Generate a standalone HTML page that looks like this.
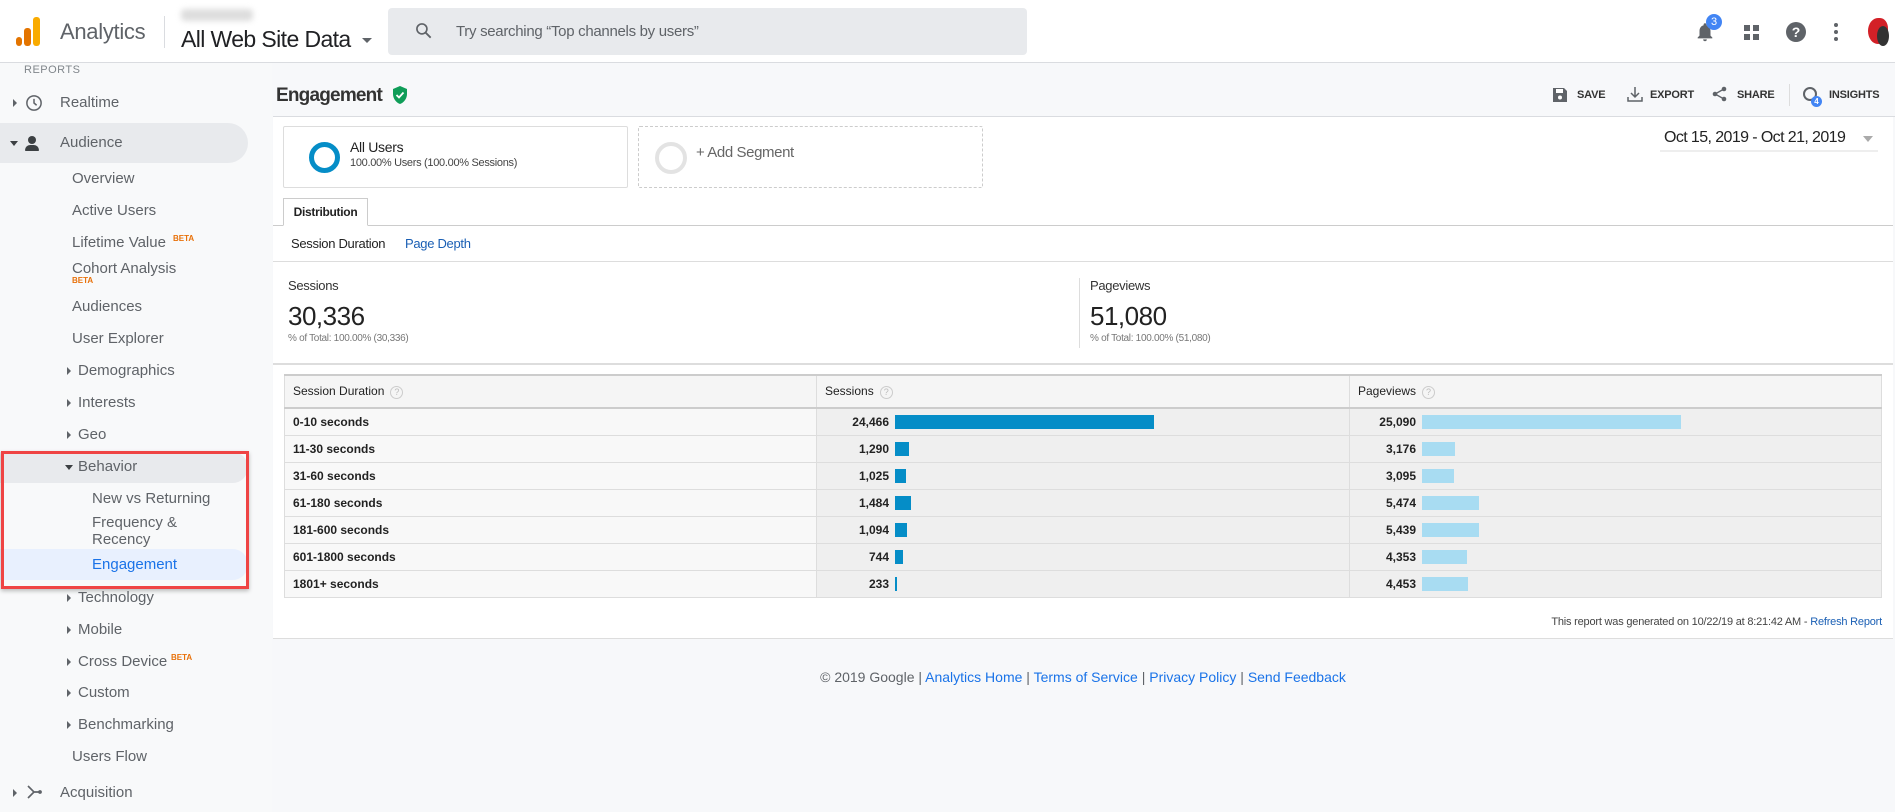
<!DOCTYPE html>
<html><head><meta charset="utf-8"><style>
*{margin:0;padding:0;box-sizing:border-box}
body{width:1895px;height:812px;overflow:hidden;background:#f7f8fa;font-family:"Liberation Sans",Arial,sans-serif;position:relative;color:#202124}
.a{position:absolute;white-space:nowrap}
.hdr{position:absolute;left:0;top:0;width:1895px;height:63px;background:#fff;border-bottom:1px solid #dadce0}
.sb{position:absolute;left:0;top:63px;width:272px;height:749px;background:#f8f9fa}
.si{position:absolute;font-size:15px;color:#5f6368;white-space:nowrap;line-height:18px}
.tri{position:absolute;width:0;height:0;border-top:4px solid transparent;border-bottom:4px solid transparent;border-left:4px solid #5f6368}
.trd{position:absolute;width:0;height:0;border-left:4px solid transparent;border-right:4px solid transparent;border-top:5px solid #3c4043}
.beta{position:absolute;color:#e8710a;font-size:8px;font-weight:bold;line-height:8px}
.card{position:absolute;left:273px;top:117px;width:1620px;height:522px;background:#fff;border-bottom:1px solid #ddd}
.tb{position:absolute;font-size:11px;color:#333;font-weight:bold;letter-spacing:-.2px}
table{position:absolute;left:284px;top:374px;width:1598px;border-collapse:collapse;font-size:12px}
td,th{border:1px solid #ddd;height:27px;padding:0 8px}
th{background:#f5f5f5;font-weight:normal;text-align:left;height:33px;color:#222;border-top:2px solid #ccc;border-bottom:2px solid #ccc}
td{font-weight:bold;color:#222}
td.l{background:#f8f8f8}
td.n{background:#efefef;padding:0}
.cellw{display:flex;align-items:center;height:26px}
.num{width:78px;text-align:right;padding-right:6px}
.bar{height:14px;background:#058dc7}
.bar2{height:14px;background:#a8dcf2}
.q{display:inline-block;width:13px;height:13px;border:1px solid #ccc;border-radius:50%;font-size:9px;color:#bbb;text-align:center;line-height:11px;margin-left:6px;vertical-align:middle}
</style></head><body>
<div class="hdr"></div>
<div class="a" style="left:16px;top:37px;width:6px;height:9px;border-radius:3px;background:#e37400"></div>
<div class="a" style="left:24px;top:28px;width:7px;height:18px;border-radius:3px;background:#e37400"></div>
<div class="a" style="left:33px;top:17px;width:7px;height:29px;border-radius:3px;background:#f9ab00"></div>
<div class="a" style="left:60px;top:19px;font-size:22px;color:#5f6368;letter-spacing:-.3px">Analytics</div>
<div class="a" style="left:164px;top:16px;width:1px;height:32px;background:#dadce0"></div>
<div class="a" style="left:181px;top:9px;width:72px;height:12px;background:#ddd;filter:blur(3px);border-radius:4px"></div>
<div class="a" style="left:181px;top:26px;font-size:23px;color:#202124;letter-spacing:-.6px">All Web Site Data</div>
<div class="a" style="left:362px;top:38px;border-left:5px solid transparent;border-right:5px solid transparent;border-top:5px solid #5f6368"></div>
<div class="a" style="left:388px;top:8px;width:639px;height:47px;background:#e8eaed;border-radius:4px"></div>
<svg class="a" style="left:414px;top:21px" width="20" height="20" viewBox="0 0 24 24"><circle cx="9.5" cy="9.5" r="6" fill="none" stroke="#5f6368" stroke-width="2"/><path d="M14 14l6 6" stroke="#5f6368" stroke-width="2.2"/></svg>
<div class="a" style="left:456px;top:23px;font-size:15px;color:#5f6368;letter-spacing:-.3px">Try searching “Top channels by users”</div>
<svg class="a" style="left:1694px;top:20px" width="22" height="24" viewBox="0 0 24 24"><path d="M12 22a2 2 0 0 0 2-2h-4a2 2 0 0 0 2 2zm6-6V11c0-3-1.6-5.6-4.5-6.3V4a1.5 1.5 0 0 0-3 0v.7C7.6 5.4 6 8 6 11v5l-2 2v1h16v-1z" fill="#5f6368"/></svg>
<div class="a" style="left:1706px;top:14px;width:16px;height:16px;border-radius:50%;background:#4285f4;color:#fff;font-size:11px;text-align:center;line-height:16px">3</div>
<div class="a" style="left:1744px;top:25px;width:6px;height:6px;background:#5f6368"></div><div class="a" style="left:1753px;top:25px;width:6px;height:6px;background:#5f6368"></div><div class="a" style="left:1744px;top:34px;width:6px;height:6px;background:#5f6368"></div><div class="a" style="left:1753px;top:34px;width:6px;height:6px;background:#5f6368"></div>
<div class="a" style="left:1786px;top:22px;width:20px;height:20px;border-radius:50%;background:#5f6368;color:#fff;font-size:14px;font-weight:bold;text-align:center;line-height:20px">?</div>
<div class="a" style="left:1834px;top:23px;width:4px;height:4px;border-radius:50%;background:#5f6368;box-shadow:0 7px 0 #5f6368,0 14px 0 #5f6368"></div>
<div class="a" style="left:1868px;top:18px;width:20px;height:26px;border-radius:50% 40% 50% 50%;background:#d32027"></div>
<div class="a" style="left:1877px;top:26px;width:12px;height:20px;border-radius:50%;background:#333"></div>

<div class="sb"></div>
<div class="si" style="left:24px;top:61px;font-size:11px;letter-spacing:.5px;color:#80868b">REPORTS</div>
<div class="tri" style="left:13px;top:99px"></div>
<svg class="a" style="left:25px;top:94px" width="18" height="18" viewBox="0 0 24 24"><circle cx="12" cy="12" r="9.5" fill="none" stroke="#5f6368" stroke-width="2"/><path d="M12 6.5V12l3.5 3" fill="none" stroke="#5f6368" stroke-width="2"/></svg>
<div class="si" style="left:60px;top:94px">Realtime</div>
<div class="a" style="left:0;top:123px;width:248px;height:40px;background:#e8eaed;border-radius:0 20px 20px 0"></div>
<div class="trd" style="left:10px;top:141px"></div>
<div class="a" style="left:28px;top:136px;width:8px;height:8px;border-radius:50%;background:#3c4043"></div>
<div class="a" style="left:25px;top:145px;width:14px;height:6px;border-radius:6px 6px 1px 1px;background:#3c4043"></div>
<div class="si" style="left:60px;top:134px">Audience</div>
<div class="si" style="left:72px;top:170px">Overview</div>
<div class="si" style="left:72px;top:202px">Active Users</div>
<div class="si" style="left:72px;top:234px">Lifetime Value</div><div class="beta" style="left:173px;top:235px">BETA</div>
<div class="si" style="left:72px;top:260px">Cohort Analysis</div>
<div class="beta" style="left:72px;top:277px">BETA</div>
<div class="si" style="left:72px;top:298px">Audiences</div>
<div class="si" style="left:72px;top:330px">User Explorer</div>
<div class="tri" style="left:67px;top:367px"></div><div class="si" style="left:78px;top:362px">Demographics</div>
<div class="tri" style="left:67px;top:399px"></div><div class="si" style="left:78px;top:394px">Interests</div>
<div class="tri" style="left:67px;top:431px"></div><div class="si" style="left:78px;top:426px">Geo</div>
<div class="a" style="left:0;top:452px;width:248px;height:31px;background:#e8eaed;border-radius:0 16px 16px 0"></div>
<div class="trd" style="left:65px;top:465px"></div><div class="si" style="left:78px;top:458px">Behavior</div>
<div class="si" style="left:92px;top:490px">New vs Returning</div>
<div class="si" style="left:92px;top:514px">Frequency &amp;</div>
<div class="si" style="left:92px;top:531px">Recency</div>
<div class="a" style="left:0;top:549px;width:248px;height:31px;background:#e8f0fe;border-radius:0 16px 16px 0"></div>
<div class="si" style="left:92px;top:556px;color:#1a73e8">Engagement</div>
<div class="a" style="left:1px;top:451px;width:248px;height:138px;border:3px solid #ef4444;box-shadow:0 2px 4px rgba(0,0,0,.25)"></div>
<div class="tri" style="left:67px;top:594px"></div><div class="si" style="left:78px;top:589px">Technology</div>
<div class="tri" style="left:67px;top:626px"></div><div class="si" style="left:78px;top:621px">Mobile</div>
<div class="tri" style="left:67px;top:658px"></div><div class="si" style="left:78px;top:653px">Cross Device</div><div class="beta" style="left:171px;top:654px">BETA</div>
<div class="tri" style="left:67px;top:689px"></div><div class="si" style="left:78px;top:684px">Custom</div>
<div class="tri" style="left:67px;top:721px"></div><div class="si" style="left:78px;top:716px">Benchmarking</div>
<div class="si" style="left:72px;top:748px">Users Flow</div>
<div class="tri" style="left:13px;top:789px"></div>
<svg class="a" style="left:25px;top:783px" width="18" height="18" viewBox="0 0 24 24"><path d="M4 4l8 8-8 8M12 12h8" fill="none" stroke="#5f6368" stroke-width="2.2"/><circle cx="20" cy="12" r="2.5" fill="#5f6368"/></svg>
<div class="si" style="left:60px;top:784px">Acquisition</div>

<div class="a" style="left:273px;top:116px;width:1622px;height:1px;background:#dadce0"></div>
<div class="a" style="left:276px;top:85px;font-size:19px;font-weight:bold;color:#333;letter-spacing:-.8px">Engagement</div>
<svg class="a" style="left:392px;top:86px" width="16" height="18" viewBox="0 0 16 18"><path d="M8 0L1 3v5c0 4.5 3 8.5 7 10 4-1.5 7-5.5 7-10V3z" fill="#0f9d58"/><path d="M4.5 9l2.5 2.5 4.5-5" fill="none" stroke="#fff" stroke-width="1.8"/></svg>
<svg class="a" style="left:1553px;top:87px" width="14" height="15" viewBox="0 0 14 15"><path d="M0 1h11l3 3v11H0z" fill="#5f6368"/><rect x="3" y="2" width="7" height="4" fill="#fff"/><circle cx="7" cy="10.5" r="2" fill="#fff"/></svg>
<div class="tb" style="left:1577px;top:89px">SAVE</div>
<svg class="a" style="left:1627px;top:86px" width="16" height="16" viewBox="0 0 16 16"><path d="M8 1v10M4 7l4 4 4-4M1 11v4h14v-4" fill="none" stroke="#5f6368" stroke-width="1.5"/></svg>
<div class="tb" style="left:1650px;top:89px">EXPORT</div>
<svg class="a" style="left:1712px;top:86px" width="15" height="16" viewBox="0 0 15 16"><circle cx="12" cy="3" r="2.3" fill="#5f6368"/><circle cx="3" cy="8" r="2.3" fill="#5f6368"/><circle cx="12" cy="13" r="2.3" fill="#5f6368"/><path d="M12 3L3 8l9 5" fill="none" stroke="#5f6368" stroke-width="1.3"/></svg>
<div class="tb" style="left:1737px;top:89px">SHARE</div>
<div class="a" style="left:1789px;top:84px;width:1px;height:22px;background:#ddd"></div>
<div class="a" style="left:1803px;top:87px;width:14px;height:14px;border:2px solid #5f6368;border-radius:50%"></div>
<div class="a" style="left:1811px;top:96px;width:11px;height:11px;border-radius:50%;background:#4285f4;color:#fff;font-size:8px;text-align:center;line-height:11px;font-weight:bold">4</div>
<div class="tb" style="left:1829px;top:89px">INSIGHTS</div>

<div class="card"></div>
<div class="a" style="left:283px;top:126px;width:345px;height:62px;border:1px solid #ddd;border-radius:2px;background:#fff"></div>
<div class="a" style="left:309px;top:142px;width:31px;height:31px;border:5px solid #058dc7;border-radius:50%"></div>
<div class="a" style="left:350px;top:139px;font-size:14px;color:#222;letter-spacing:-.3px">All Users</div>
<div class="a" style="left:350px;top:157px;font-size:11px;color:#444;letter-spacing:-.3px">100.00% Users (100.00% Sessions)</div>
<div class="a" style="left:638px;top:126px;width:345px;height:62px;border:1px dashed #ccc;border-radius:2px"></div>
<div class="a" style="left:655px;top:142px;width:32px;height:32px;border:4px solid #e3e3e3;border-radius:50%"></div>
<div class="a" style="left:696px;top:144px;font-size:15px;color:#666;letter-spacing:-.4px">+ Add Segment</div>
<div class="a" style="left:1664px;top:129px;font-size:16px;color:#222;letter-spacing:-.6px">Oct 15, 2019 - Oct 21, 2019</div>
<div class="a" style="left:1863px;top:136px;border-left:5px solid transparent;border-right:5px solid transparent;border-top:6px solid #aaa"></div>
<div class="a" style="left:1660px;top:150px;width:218px;height:2px;background:#eee"></div>

<div class="a" style="left:273px;top:225px;width:1620px;height:1px;background:#ccc"></div>
<div class="a" style="left:283px;top:198px;width:85px;height:28px;border:1px solid #ccc;border-bottom:1px solid #fff;background:#fff;font-size:12px;font-weight:bold;text-align:center;line-height:26px;color:#222;letter-spacing:-.3px">Distribution</div>
<div class="a" style="left:291px;top:236px;font-size:13px;color:#222;letter-spacing:-.3px">Session Duration</div>
<div class="a" style="left:405px;top:236px;font-size:13px;color:#1a5fb4;letter-spacing:-.3px">Page Depth</div>
<div class="a" style="left:273px;top:261px;width:1620px;height:1px;background:#ddd"></div>
<div class="a" style="left:288px;top:278px;font-size:13px;color:#333;letter-spacing:-.3px">Sessions</div>
<div class="a" style="left:288px;top:301px;font-size:26px;color:#222;letter-spacing:-.5px">30,336</div>
<div class="a" style="left:288px;top:333px;font-size:10px;color:#777;letter-spacing:-.3px">% of Total: 100.00% (30,336)</div>
<div class="a" style="left:1079px;top:278px;width:1px;height:70px;background:#ddd"></div>
<div class="a" style="left:1090px;top:278px;font-size:13px;color:#333;letter-spacing:-.3px">Pageviews</div>
<div class="a" style="left:1090px;top:301px;font-size:26px;color:#222;letter-spacing:-.5px">51,080</div>
<div class="a" style="left:1090px;top:333px;font-size:10px;color:#777;letter-spacing:-.3px">% of Total: 100.00% (51,080)</div>
<div class="a" style="left:273px;top:363px;width:1620px;height:2px;background:#ddd"></div>

<table>
<tr><th style="width:532px">Session Duration<span class="q">?</span></th><th style="width:533px">Sessions<span class="q">?</span></th><th>Pageviews<span class="q">?</span></th></tr>
<tr><td class="l">0-10 seconds</td><td class="n"><div class="cellw"><div class="num">24,466</div><div class="bar" style="width:259px"></div></div></td><td class="n"><div class="cellw"><div class="num" style="width:72px">25,090</div><div class="bar2" style="width:259px"></div></div></td></tr>
<tr><td class="l">11-30 seconds</td><td class="n"><div class="cellw"><div class="num">1,290</div><div class="bar" style="width:14px"></div></div></td><td class="n"><div class="cellw"><div class="num" style="width:72px">3,176</div><div class="bar2" style="width:33px"></div></div></td></tr>
<tr><td class="l">31-60 seconds</td><td class="n"><div class="cellw"><div class="num">1,025</div><div class="bar" style="width:11px"></div></div></td><td class="n"><div class="cellw"><div class="num" style="width:72px">3,095</div><div class="bar2" style="width:32px"></div></div></td></tr>
<tr><td class="l">61-180 seconds</td><td class="n"><div class="cellw"><div class="num">1,484</div><div class="bar" style="width:16px"></div></div></td><td class="n"><div class="cellw"><div class="num" style="width:72px">5,474</div><div class="bar2" style="width:57px"></div></div></td></tr>
<tr><td class="l">181-600 seconds</td><td class="n"><div class="cellw"><div class="num">1,094</div><div class="bar" style="width:12px"></div></div></td><td class="n"><div class="cellw"><div class="num" style="width:72px">5,439</div><div class="bar2" style="width:57px"></div></div></td></tr>
<tr><td class="l">601-1800 seconds</td><td class="n"><div class="cellw"><div class="num">744</div><div class="bar" style="width:8px"></div></div></td><td class="n"><div class="cellw"><div class="num" style="width:72px">4,353</div><div class="bar2" style="width:45px"></div></div></td></tr>
<tr><td class="l">1801+ seconds</td><td class="n"><div class="cellw"><div class="num">233</div><div class="bar" style="width:2px"></div></div></td><td class="n"><div class="cellw"><div class="num" style="width:72px">4,453</div><div class="bar2" style="width:46px"></div></div></td></tr>
</table>
<div class="a" style="right:13px;top:616px;font-size:11px;color:#444;letter-spacing:-.2px">This report was generated on 10/22/19 at 8:21:42 AM - <span style="color:#1a5fb4">Refresh Report</span></div>
<div class="a" style="left:1083px;top:669px;transform:translateX(-50%);font-size:14px;color:#5f6368">© 2019 Google | <span style="color:#1a73e8">Analytics Home</span> | <span style="color:#1a73e8">Terms of Service</span> | <span style="color:#1a73e8">Privacy Policy</span> | <span style="color:#1a73e8">Send Feedback</span></div>
</body></html>
